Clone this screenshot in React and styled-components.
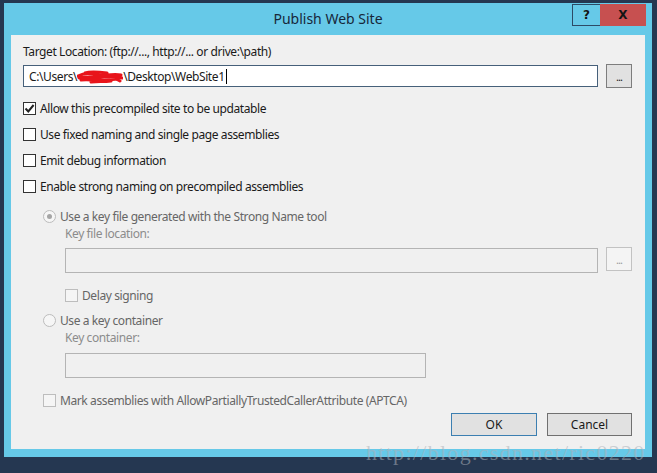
import React from 'react'
import styled, { createGlobalStyle } from 'styled-components'

const Global = createGlobalStyle`
  html, body {
    margin: 0;
    padding: 0;
    background: #253751;
  }
`

const Desktop = styled.div`
  position: relative;
  width: 657px;
  height: 473px;
  box-sizing: border-box;
  padding: 3px 5px 0 4px;
  background: #253751;
  overflow: hidden;
  font-family: "Noto Sans", "Open Sans", sans-serif;
`

const Window = styled.div`
  width: 648px;
  height: 454px;
  background: #66c9e8;
  display: flex;
  flex-direction: column;
  box-sizing: border-box;
  padding: 0 7px 8px 7px;
`

const TitleBar = styled.div`
  height: 33px;
  display: grid;
  grid-template-columns: 1fr auto 1fr;
  margin: 0 -7px;
`

const Title = styled.div`
  grid-column: 2;
  align-self: center;
  font-size: 14px;
  color: #17273a;
  padding-bottom: 1px;
`

const Caption = styled.div`
  grid-column: 3;
  justify-self: end;
  display: flex;
  height: 22px;
  margin: 1px 6px 0 0;
`

const CapButton = styled.div`
  width: ${p => p.w}px;
  box-sizing: border-box;
  display: flex;
  align-items: center;
  justify-content: center;
  font-family: "DejaVu Sans", sans-serif;
  font-weight: bold;
  font-size: 12px;
  color: #141414;
  background: ${p => (p.close ? '#c75050' : 'transparent')};
  border: ${p => (p.close ? 'none' : '1px solid #2d4a66')};
  border-right: none;
`

const Client = styled.div`
  flex: 1;
  background: #f0f0f0;
  box-sizing: border-box;
  padding: 9px 13px 13px 12px;
  display: flex;
  flex-direction: column;
  font-size: 12px;
  color: #1a1a1a;
`

const Label = styled.div`
  line-height: 16px;
  height: 16px;
  white-space: nowrap;
  padding-left: ${p => p.indent || 0}px;
  color: ${p => (p.muted ? '#8c8c8c' : '#1a1a1a')};
  letter-spacing: -0.4px;
`

const FieldRow = styled.div`
  display: flex;
  gap: 8px;
  margin-top: ${p => p.mt}px;
  padding-left: ${p => p.indent || 0}px;
  align-items: flex-start;
`

const TextBox = styled.div`
  box-sizing: border-box;
  height: ${p => p.h}px;
  width: ${p => (p.w ? `${p.w}px` : 'auto')};
  flex: ${p => (p.w ? 'none' : 1)};
  border: 1px solid ${p => (p.disabled ? '#b4b4b4' : '#46607a')};
  background: ${p => (p.disabled ? '#f0f0f0' : '#ffffff')};
  display: flex;
  align-items: center;
  padding-left: 5px;
  white-space: nowrap;
  letter-spacing: -0.4px;
`

const Caret = styled.span`
  display: inline-block;
  width: 1px;
  height: 15px;
  background: #000;
  margin-left: 1px;
`

const BrowseButton = styled.div`
  box-sizing: border-box;
  width: 26px;
  height: 24px;
  margin-top: -1px;
  border: 1px solid ${p => (p.disabled ? '#c2c2c2' : '#7d7d7d')};
  background: ${p => (p.disabled ? '#f4f4f4' : '#e1e1e1')};
  color: ${p => (p.disabled ? '#9a9a9a' : '#222')};
  font-size: 11px;
  line-height: 22px;
  text-align: center;
  letter-spacing: -1px;
  padding-top: 1px;
`

const CheckRow = styled.div`
  height: ${p => p.h}px;
  margin-top: ${p => p.mt || 0}px;
  padding-left: ${p => p.indent || 0}px;
  display: flex;
  align-items: center;
  gap: 4px;
  white-space: nowrap;
  letter-spacing: -0.4px;
  color: ${p => (p.disabled ? '#666' : '#1a1a1a')};
`

const Box = styled.span`
  box-sizing: border-box;
  width: 13px;
  height: 13px;
  flex: none;
  border: 1px solid ${p => (p.disabled ? '#bdbdbd' : '#333')};
  background: ${p => (p.disabled ? '#f5f5f5' : '#fff')};
  display: flex;
  align-items: center;
  justify-content: center;
`

const Radio = styled.span`
  box-sizing: border-box;
  width: 13px;
  height: 13px;
  flex: none;
  border-radius: 50%;
  border: 1px solid #bcbcbc;
  background: #f6f6f6;
  display: flex;
  align-items: center;
  justify-content: center;
  &::after {
    content: '';
    width: 5px;
    height: 5px;
    border-radius: 50%;
    background: ${p => (p.on ? '#a5a5a5' : 'transparent')};
  }
`

const Group = styled.div`
  padding-left: 20px;
  display: flex;
  flex-direction: column;
`

const Footer = styled.div`
  margin-top: 3px;
  display: flex;
  justify-content: flex-end;
  gap: 10px;
`

const PushButton = styled.div`
  box-sizing: border-box;
  width: ${p => p.w}px;
  height: 23px;
  background: #e1e1e1;
  border: 1px solid ${p => (p.primary ? '#3c7fb1' : '#707070')};
  display: flex;
  align-items: center;
  justify-content: center;
  color: #1a1a1a;
`

const Watermark = styled.div`
  position: absolute;
  left: 366px;
  top: 440px;
  font-family: "Liberation Serif", serif;
  font-size: 22px;
  letter-spacing: 1.3px;
  color: rgba(170, 176, 184, 0.55);
  white-space: nowrap;
  pointer-events: none;
`

const Check = () => (
  <svg width="11" height="11" viewBox="0 0 11 11">
    <path d="M1.5 5.5 L4.3 8.4 L9.6 2" fill="none" stroke="#222" strokeWidth="2" />
  </svg>
)

const Scribble = () => (
  <svg width="46" height="15" viewBox="0 0 46 15" style={{ verticalAlign: 'middle' }}>
    <path
      d="M1 7 C8 3 14 4 20 6 S34 4 44 6 M2 9 C10 7 18 9 26 8 S38 7 45 9 M4 11 C12 10 20 12 30 11 S40 10 43 12 M8 4 C14 2 22 3 30 4 M14 13 C20 12 26 13 34 12"
      fill="none"
      stroke="#e8141b"
      strokeWidth="3"
      strokeLinecap="round"
    />
  </svg>
)

const Dots = () => <span>...</span>

export default function App() {
  return (
    <Desktop>
      <Global />
      <Window>
        <TitleBar>
          <Title>Publish Web Site</Title>
          <Caption>
            <CapButton w={28}>?</CapButton>
            <CapButton w={46} close>X</CapButton>
          </Caption>
        </TitleBar>
        <Client>
          <Label>Target Location: (ftp://..., http://... or drive:\path)</Label>
          <FieldRow mt={5}>
            <TextBox h={22}>
              C:\Users\<Scribble />\Desktop\WebSite1<Caret />
            </TextBox>
            <BrowseButton><Dots /></BrowseButton>
          </FieldRow>

          <CheckRow h={26} mt={7}>
            <Box><Check /></Box>
            Allow this precompiled site to be updatable
          </CheckRow>
          <CheckRow h={26}>
            <Box />
            Use fixed naming and single page assemblies
          </CheckRow>
          <CheckRow h={26}>
            <Box />
            Emit debug information
          </CheckRow>
          <CheckRow h={26}>
            <Box />
            Enable strong naming on precompiled assemblies
          </CheckRow>

          <Group>
            <CheckRow h={20} mt={7} disabled>
              <Radio on />
              Use a key file generated with the Strong Name tool
            </CheckRow>
            <Label indent={22} muted>Key file location:</Label>
            <FieldRow mt={6} indent={22}>
              <TextBox h={25} disabled />
              <BrowseButton disabled><Dots /></BrowseButton>
            </FieldRow>
            <CheckRow h={20} mt={12} indent={22} disabled>
              <Box disabled />
              Delay signing
            </CheckRow>
            <CheckRow h={20} mt={5} disabled>
              <Radio />
              Use a key container
            </CheckRow>
            <Label indent={22} muted>Key container:</Label>
            <FieldRow mt={7} indent={22}>
              <TextBox h={25} w={361} disabled />
            </FieldRow>
            <CheckRow h={20} mt={12} disabled>
              <Box disabled />
              Mark assemblies with AllowPartiallyTrustedCallerAttribute (APTCA)
            </CheckRow>
          </Group>

          <Footer>
            <PushButton w={86} primary>OK</PushButton>
            <PushButton w={85}>Cancel</PushButton>
          </Footer>
        </Client>
      </Window>
      <Watermark>http://blog.csdn.net/ric0220</Watermark>
    </Desktop>
  )
}
